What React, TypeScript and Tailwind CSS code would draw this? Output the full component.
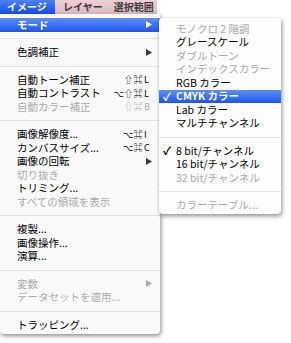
import React from "react";

type Item =
  | { kind: "sep" }
  | {
      kind: "item";
      label: string;
      disabled?: boolean;
      active?: boolean;
      checked?: boolean;
      mods?: string;
      keyChar?: string;
      sub?: boolean;
    };

const font = {
  fontFamily: '"Noto Sans CJK JP", "DejaVu Sans", sans-serif',
};

const mainItems: Item[] = [
  { kind: "item", label: "モード", active: true, sub: true },
  { kind: "sep" },
  { kind: "item", label: "色調補正", sub: true },
  { kind: "sep" },
  { kind: "item", label: "自動トーン補正", mods: "⇧⌘", keyChar: "L" },
  { kind: "item", label: "自動コントラスト", mods: "⌥⇧⌘", keyChar: "L" },
  { kind: "item", label: "自動カラー補正", mods: "⇧⌘", keyChar: "B", disabled: true },
  { kind: "sep" },
  { kind: "item", label: "画像解像度...", mods: "⌥⌘", keyChar: "I" },
  { kind: "item", label: "カンバスサイズ...", mods: "⌥⌘", keyChar: "C" },
  { kind: "item", label: "画像の回転", sub: true },
  { kind: "item", label: "切り抜き", disabled: true },
  { kind: "item", label: "トリミング..." },
  { kind: "item", label: "すべての領域を表示", disabled: true },
  { kind: "sep" },
  { kind: "item", label: "複製..." },
  { kind: "item", label: "画像操作..." },
  { kind: "item", label: "演算..." },
  { kind: "sep" },
  { kind: "item", label: "変数", sub: true, disabled: true },
  { kind: "item", label: "データセットを適用...", disabled: true },
  { kind: "sep" },
  { kind: "item", label: "トラッピング..." },
];

const modeItems: Item[] = [
  { kind: "item", label: "モノクロ 2 階調", disabled: true },
  { kind: "item", label: "グレースケール" },
  { kind: "item", label: "ダブルトーン", disabled: true },
  { kind: "item", label: "インデックスカラー", disabled: true },
  { kind: "item", label: "RGB カラー" },
  { kind: "item", label: "CMYK カラー", active: true, checked: true },
  { kind: "item", label: "Lab カラー" },
  { kind: "item", label: "マルチチャンネル" },
  { kind: "sep" },
  { kind: "item", label: "8 bit/チャンネル", checked: true },
  { kind: "item", label: "16 bit/チャンネル" },
  { kind: "item", label: "32 bit/チャンネル", disabled: true },
  { kind: "sep" },
  { kind: "item", label: "カラーテーブル...", disabled: true },
];

function Arrow({ color }: { color: string }) {
  return (
    <svg width="6" height="7" viewBox="0 0 6 7">
      <polygon points="0,0 6,3.5 0,7" fill={color} />
    </svg>
  );
}

function MenuRow({ item }: { item: Item }) {
  if (item.kind === "sep") {
    return (
      <div className="flex h-[14px] items-center">
        <div className="h-px w-full bg-[#e3e3e6]" />
      </div>
    );
  }

  const textColor = item.active
    ? "text-white"
    : item.disabled
    ? "text-[#ababab]"
    : "text-black";
  const bg = item.active ? "bg-gradient-to-b from-[#5e8ff7] to-[#1c53ea]" : "";
  const weight = item.active ? "font-bold" : "font-normal";

  return (
    <div className={`relative flex h-[13.5px] items-center pl-[17px] pr-[8px] ${bg} ${textColor}`}>
      {item.checked && (
        <span className="absolute left-[4px] top-0 text-[11px] font-bold leading-[13.5px]">✓</span>
      )}
      <span className={`flex-1 whitespace-nowrap text-[10.5px] leading-none ${weight}`}>
        {item.label}
      </span>
      {item.mods && (
        <span className="flex items-center text-[9px] leading-none">
          <span className="tracking-[0.5px]">{item.mods}</span>
          <span className="w-[9px] pl-[1px] text-left">{item.keyChar}</span>
        </span>
      )}
      {item.sub && (
        <Arrow color={item.active ? "#ffffff" : item.disabled ? "#ababab" : "#3a3a3a"} />
      )}
    </div>
  );
}

export default function App() {
  return (
    <div className="relative h-[343px] w-[291px] overflow-hidden bg-white" style={font}>
      {/* menu bar */}
      <div className="flex h-[14px] w-[157px] items-center whitespace-nowrap bg-gradient-to-b from-[#ecd0d4] to-[#dfb9bf] text-[10px] font-bold leading-none">
        <div className="flex h-full w-[55px] shrink-0 items-center bg-gradient-to-b from-[#4c7ff5] to-[#1548e6] pl-[7px] text-white">
          イメージ
        </div>
        <div className="shrink-0 pl-[8px] text-[#3a3a3a]">レイヤー</div>
        <div className="shrink-0 pl-[11px] text-[#3a3a3a]">選択範囲</div>
      </div>

      {/* image menu */}
      <div className="w-[160px] rounded-b-[4px] bg-[#fafafb] pt-[4px] pb-[2px] shadow-[1px_2px_4px_rgba(0,0,0,0.45)]">
        {mainItems.map((item, i) => (
          <MenuRow key={i} item={item} />
        ))}
      </div>

      {/* mode submenu */}
      <div className="absolute left-[159px] top-[18px] w-[122px] rounded-[4px] bg-[#fdfdfd] pt-[4px] pb-[2px] shadow-[1px_2px_4px_rgba(0,0,0,0.45)]">
        {modeItems.map((item, i) => (
          <MenuRow key={i} item={item} />
        ))}
      </div>
    </div>
  );
}
